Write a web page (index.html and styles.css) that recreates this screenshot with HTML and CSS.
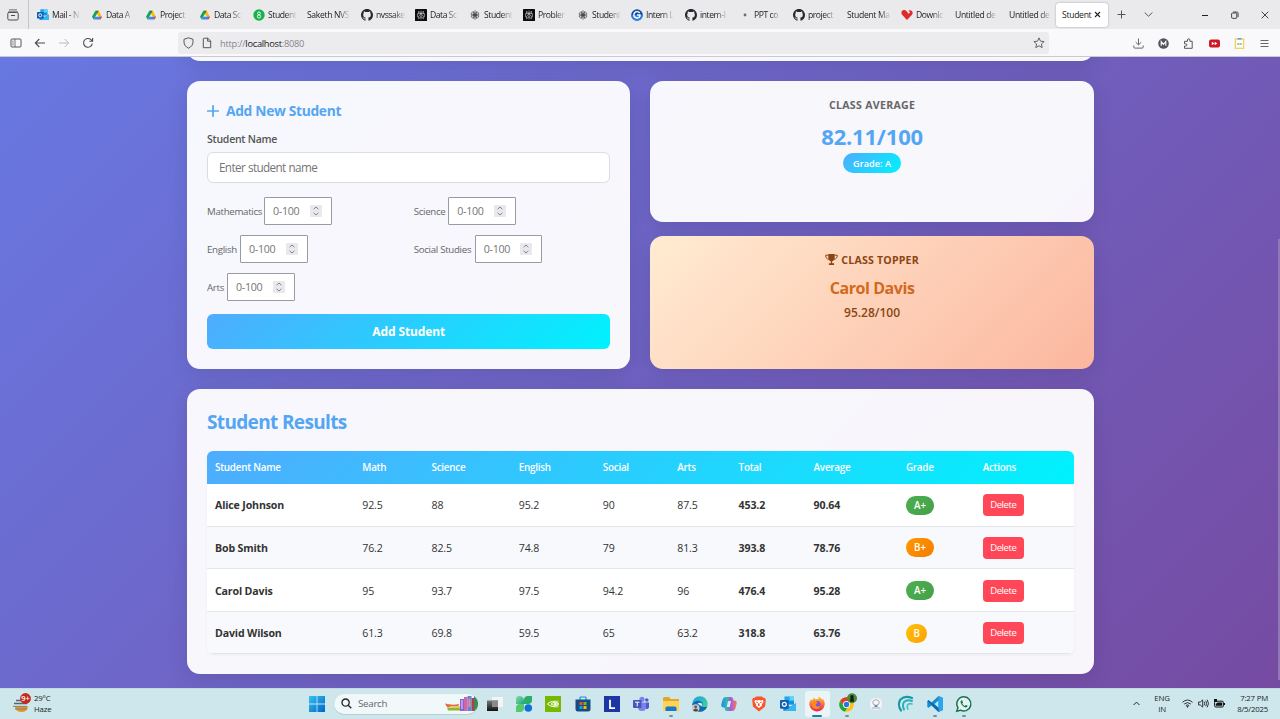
FILE: index.html
```html
<!DOCTYPE html>
<html lang="en">
<head>
<meta charset="utf-8">
<title>Student Management</title>
<link rel="stylesheet" href="styles.css">
</head>
<body>
<svg class="sprite" aria-hidden="true">
  <defs>
    <linearGradient id="g-win" x1="0" y1="0" x2="1" y2="1"><stop offset="0" stop-color="#35c1f1"/><stop offset="1" stop-color="#0067c8"/></linearGradient>
    <linearGradient id="g-fox" x1="0" y1="0" x2="0" y2="1"><stop offset="0" stop-color="#ffce35"/><stop offset=".5" stop-color="#ff7139"/><stop offset="1" stop-color="#e8214f"/></linearGradient>
    <linearGradient id="g-edge" x1="0" y1="0" x2="1" y2="1"><stop offset="0" stop-color="#1b9de2"/><stop offset=".6" stop-color="#35c6b0"/><stop offset="1" stop-color="#69d860"/></linearGradient>
    <linearGradient id="g-cop" x1="0" y1="0" x2="1" y2="0"><stop offset="0" stop-color="#1c8be8"/><stop offset=".35" stop-color="#36b8a8"/><stop offset=".6" stop-color="#a05be8"/><stop offset="1" stop-color="#fb7b4a"/></linearGradient>
    <linearGradient id="g-petal" x1="0" y1="0" x2="1" y2="1"><stop offset="0" stop-color="#8fdc9b"/><stop offset="1" stop-color="#17a589"/></linearGradient>
    <linearGradient id="g-task" x1="0" y1="0" x2="0" y2="1"><stop offset="0" stop-color="#777"/><stop offset="1" stop-color="#111"/></linearGradient>
  </defs>
  <symbol id="drive" viewBox="0 0 24 24"><path d="M8 2h8l8 14h-8z" fill="#fbbc04"/><path d="M8 2l4 7-8 14-4-7z" fill="#18a05a"/><path d="M8 16h16l-4 7H4z" fill="#4285f4"/><path d="M18 16h6l-4 7z" fill="#ea4335"/><path d="M8 2h8l-4 7z" fill="#188038"/></symbol>
  <symbol id="github" viewBox="0 0 16 16"><path fill="#24292f" d="M8 0C3.58 0 0 3.58 0 8c0 3.54 2.29 6.53 5.47 7.59.4.07.55-.17.55-.38 0-.19-.01-.82-.01-1.49-2.01.37-2.53-.49-2.69-.94-.09-.23-.48-.94-.82-1.13-.28-.15-.68-.52-.01-.53.63-.01 1.08.58 1.23.82.72 1.21 1.87.87 2.33.66.07-.52.28-.87.51-1.07-1.78-.2-3.64-.89-3.64-3.95 0-.87.31-1.59.82-2.15-.08-.2-.36-1.02.08-2.12 0 0 .67-.21 2.2.82A7.6 7.6 0 0 1 8 3.87c.68 0 1.36.09 2 .27 1.53-1.04 2.2-.82 2.2-.82.44 1.1.16 1.92.08 2.12.51.56.82 1.27.82 2.15 0 3.07-1.87 3.75-3.65 3.95.29.25.54.73.54 1.48 0 1.07-.01 1.93-.01 2.2 0 .21.15.46.55.38A8.01 8.01 0 0 0 16 8c0-4.42-3.58-8-8-8z"/></symbol>
  <symbol id="knot" viewBox="0 0 24 24"><g fill="none" stroke="#3a3a3e" stroke-width="1.400"><ellipse cx="12" cy="8" rx="4.2" ry="6"/><ellipse cx="12" cy="8" rx="4.2" ry="6" transform="rotate(60 12 12)"/><ellipse cx="12" cy="8" rx="4.2" ry="6" transform="rotate(120 12 12)"/><ellipse cx="12" cy="8" rx="4.2" ry="6" transform="rotate(180 12 12)"/><ellipse cx="12" cy="8" rx="4.2" ry="6" transform="rotate(240 12 12)"/><ellipse cx="12" cy="8" rx="4.2" ry="6" transform="rotate(300 12 12)"/></g></symbol>
  <symbol id="mesh" viewBox="0 0 12 12"><rect width="12" height="12" rx=".6" fill="#0c0c0c"/><path d="M6 1.6v8.800M2.600 4.600h6.800v3.600M2.600 4.600v3.600M3.600 2.200L6 4.600l2.400-2.400v2.400M3.600 2.200v2.400M6 4.800L3.600 7.200v2.600L6 7.600l2.400 2.200V7.200z" fill="none" stroke="#ddd" stroke-width=".6"/></symbol>
  <symbol id="outlook" viewBox="0 0 24 24"><path d="M7 1h14v12H7z" fill="#1490df"/><path d="M14 1h7v6h-7z" fill="#50d9ff"/><path d="M7 1h7v6H7z" fill="#28a8ea"/><path d="M5 11l10 5 9-5v11H5z" fill="#1a86d8"/><path d="M24 11v11H7z" fill="#35b8f1"/><rect y="6" width="13" height="13" rx="1.2" fill="#0f5fb5"/><circle cx="6.500" cy="12.500" r="3" fill="none" stroke="#fff" stroke-width="1.800"/></symbol>
  <symbol id="spin" viewBox="0 0 12 12"><rect width="12" height="12" rx="1" fill="#e9e9ed"/><path d="M3.600 4.200L6 2l2.400 2.200M3.600 7.800L6 10l2.400-2.200" fill="none" stroke="#77777e" stroke-width=".9"/></symbol>
</svg>

<header class="browser">
  <div class="tabs">
    <div class="tabs-lead"><svg width="12" height="12" viewBox="0 0 12 12" fill="none" stroke="#4a4a50"><path d="M2 .9h8M1.200 2.900h9.600" stroke-width=".8"/><rect x=".8" y="3.400" width="10.400" height="7.600" rx="1.300"/><path d="M4 6.500h4"/></svg></div>
    <div class="tab"><svg class="fav"><use href="#outlook"/></svg><span>Mail - N</span></div>
    <div class="tab"><svg class="fav small"><use href="#drive"/></svg><span>Data A</span></div>
    <div class="tab"><svg class="fav small"><use href="#drive"/></svg><span>Project</span></div>
    <div class="tab"><svg class="fav small"><use href="#drive"/></svg><span>Data Sc</span></div>
    <div class="tab"><svg class="fav" viewBox="0 0 12 12"><circle cx="6" cy="6" r="5.700" fill="#16b14b"/><circle cx="6" cy="4.400" r="1.400" fill="none" stroke="#fff" stroke-width=".9"/><circle cx="6" cy="7.500" r="1.600" fill="none" stroke="#fff" stroke-width=".9"/></svg><span>Student</span></div>
    <div class="tab wide"><span>Saketh NVS</span></div>
    <div class="tab"><svg class="fav"><use href="#github"/></svg><span>nvssake</span></div>
    <div class="tab"><svg class="fav"><use href="#mesh"/></svg><span>Data Sc</span></div>
    <div class="tab"><svg class="fav small"><use href="#knot"/></svg><span>Student</span></div>
    <div class="tab"><svg class="fav"><use href="#mesh"/></svg><span>Probler</span></div>
    <div class="tab"><svg class="fav small"><use href="#knot"/></svg><span>Student</span></div>
    <div class="tab"><svg class="fav" viewBox="0 0 12 12"><circle cx="6" cy="6" r="5.800" fill="#164fa0"/><path d="M.2 6a5.800 5.800 0 0 0 11.600 0z" fill="#2f83df"/><path d="M8.700 4A3.200 3.200 0 1 0 9 7V6H6.200" fill="none" stroke="#fff" stroke-width="1.400"/></svg><span>Intern L</span></div>
    <div class="tab"><svg class="fav"><use href="#github"/></svg><span>intern-l</span></div>
    <div class="tab"><svg class="fav" viewBox="0 0 12 12"><circle cx="6" cy="6" r="1.400" fill="#6a6a70"/></svg><span>PPT co</span></div>
    <div class="tab"><svg class="fav"><use href="#github"/></svg><span>project</span></div>
    <div class="tab wide"><span>Student Ma</span></div>
    <div class="tab"><svg class="fav" viewBox="0 0 12 12"><path d="M6 11L1.300 6C-.5 3.800.6 1.200 2.800 1c1.500 0 2.400.7 3.200 1.700l1.600 2 1.500-1.200L7.500 1.800Q8.300 1 9.500 1.300c2 .7 3 2.700 1.300 4.600z" fill="#df2b2b"/></svg><span>Downlc</span></div>
    <div class="tab wide"><span>Untitled de</span></div>
    <div class="tab wide"><span>Untitled de</span></div>
    <div class="tab active"><span>Student</span><svg width="7" height="7" viewBox="0 0 7 7"><path d="M1 1l5 5M6 1L1 6" stroke="#222" stroke-width="1.100"/></svg></div>
    <div class="window-tools">
      <svg width="9" height="9" viewBox="0 0 9 9" stroke="#55555c"><path d="M4.500 .5v8M.5 4.500h8"/></svg>
      <svg width="9" height="9" viewBox="0 0 9 9" fill="none" stroke="#55555c"><path d="M.7 2.500L4.500 6.300 8.300 2.500"/></svg>
    </div>
    <div class="window-buttons">
      <svg width="8" height="8" viewBox="0 0 8 8" stroke="#222"><path d="M1 4.500h6"/></svg>
      <svg width="8" height="8" viewBox="0 0 8 8" fill="none" stroke="#333" stroke-width=".9"><rect x=".6" y="2" width="5.200" height="5.300" rx=".8"/><path d="M2.200 1h3.600q1.300 0 1.300 1.300V6"/></svg>
      <svg width="8" height="8" viewBox="0 0 8 8" stroke="#333" stroke-width=".9"><path d="M.7 .7l6.600 6.600M7.300 .7L.7 7.300"/></svg>
    </div>
  </div>
  <div class="toolbar">
    <div class="nav">
      <svg width="12" height="12" viewBox="0 0 12 12" fill="none" stroke="#55555c"><rect x="1" y="2" width="10" height="8" rx="1"/><path d="M5 2v8M2.300 4.200h1.400M2.300 6h1.400M2.300 7.800h1.400" stroke-width=".8"/></svg>
      <svg width="12" height="12" viewBox="0 0 12 12" fill="none" stroke="#4a4a50" stroke-width="1.100"><path d="M11 6H1.500M5.300 2L1.300 6l4 4"/></svg>
      <svg width="12" height="12" viewBox="0 0 12 12" fill="none" stroke="#b9b9be" stroke-width="1"><path d="M1 6h9.500M6.700 2l4 4-4 4"/></svg>
      <svg width="12" height="12" viewBox="0 0 12 12" fill="none" stroke="#4a4a50" stroke-width="1.100"><path d="M10.300 6.500A4.400 4.400 0 1 1 9 2.700L10.500 4M10.600 1v3.300H7.400"/></svg>
    </div>
    <div class="urlbar">
      <svg width="11" height="12" viewBox="0 0 11 12" fill="none" stroke="#55555c"><path d="M5.500 .8L10 2.300v2.500c0 3-1.600 5-4.500 6.400C2.600 9.800 1 7.800 1 4.800V2.300z"/></svg>
      <svg width="10" height="12" viewBox="0 0 10 12" fill="none" stroke="#55555c"><path d="M2.200 1.200h3.600L8.700 4v6.700H1.300V2q0-.8.9-.8zM5.600 1.200v3h3"/></svg>
      <span class="url">http://<b>localhost</b>:8080</span>
      <svg class="star" width="12" height="12" viewBox="0 0 12 12" fill="none" stroke="#55555c" stroke-width=".9"><path d="M6 .9l1.500 3.300 3.600.4-2.700 2.400.8 3.600L6 8.800l-3.200 1.800.8-3.600L.9 4.600l3.600-.4z"/></svg>
    </div>
    <div class="extensions">
      <svg width="11" height="11" viewBox="0 0 11 11" fill="none" stroke="#66666c"><path d="M5.500 .5v6.300M2.700 4.200l2.800 2.700 2.800-2.700M.8 7.500V9q0 1.100 1 1.100h7.400q1 0 1-1.100V7.500"/></svg>
      <svg width="11" height="11" viewBox="0 0 11 11"><circle cx="5.500" cy="5.500" r="5.300" fill="#54545c"/><path d="M3.200 7.800V3.500l2.300 2.800 2.300-2.800v4.300" fill="none" stroke="#fff" stroke-width="1.100"/></svg>
      <svg width="11" height="11" viewBox="0 0 11 11" fill="none" stroke="#55555c"><path d="M1.500 3.300h3V2q0-1.200 1.200-1.200T6.900 2v1.300h2.300v7H1.500V8h1.200q1.200 0 1.200-1.100T2.700 5.800H1.500z"/></svg>
      <svg width="11" height="11" viewBox="0 0 11 11"><rect y="1.500" width="11" height="8" rx="2" fill="#cf1922"/><path d="M2.800 3.800l2.700 1.700-2.700 1.700zM5.700 3.800l2.700 1.700-2.700 1.700z" fill="#fff"/></svg>
      <svg width="11" height="11" viewBox="0 0 11 11" fill="none"><rect x="1.300" y="1" width="8.400" height="9.300" fill="#fffdf0" stroke="#ecd254" stroke-width="1.200"/><path d="M3.500 .8h4" stroke="#5ba6dc" stroke-width="1.600"/><path d="M3 6h5M4.200 5v2M6.800 5v2" stroke="#78a8b8" stroke-width=".8"/></svg>
      <svg width="11" height="11" viewBox="0 0 11 11" stroke="#55555c" stroke-width=".9"><path d="M1.500 2.500h8M1.500 5.500h8M1.500 8.500h8"/></svg>
    </div>
  </div>
</header>

<main class="page">
  <div class="container">
    <div class="card card-tail"></div>
    <div class="top-grid">
      <section class="card form-card">
        <h3 class="form-title"><svg width="12" height="12" viewBox="0 0 12 12"><path d="M6 .7v10.600M.7 6h10.600" stroke="#54a6f3" stroke-width="1.700" stroke-linecap="round"/></svg><span>Add New Student</span></h3>
        <label class="name-label">Student Name</label>
        <div class="name-input">Enter student name</div>
        <div class="marks">
          <div class="mark"><label class="l-math">Mathematics</label><div class="num"><span>0-100</span><svg width="12" height="12"><use href="#spin"/></svg></div></div>
          <div class="mark"><label class="l-sci">Science</label><div class="num"><span>0-100</span><svg width="12" height="12"><use href="#spin"/></svg></div></div>
          <div class="mark"><label class="l-eng">English</label><div class="num"><span>0-100</span><svg width="12" height="12"><use href="#spin"/></svg></div></div>
          <div class="mark"><label class="l-soc">Social Studies</label><div class="num"><span>0-100</span><svg width="12" height="12"><use href="#spin"/></svg></div></div>
          <div class="mark"><label class="l-arts">Arts</label><div class="num"><span>0-100</span><svg width="12" height="12"><use href="#spin"/></svg></div></div>
        </div>
        <div class="submit"><span>Add Student</span></div>
      </section>
      <div class="stats">
        <section class="card stat">
          <h4 class="stat-title">CLASS AVERAGE</h4>
          <div class="avg">82.11/100</div>
          <div class="avg-grade">Grade: A</div>
        </section>
        <section class="card stat topper">
          <h4 class="stat-title"><svg width="13" height="11" viewBox="0 0 13 11"><path d="M3.300 0h6.400v3.500c0 2-1 3.400-2.500 3.800v1.900h1.900V11H3.900V9.200h1.900V7.300C4.300 6.900 3.300 5.500 3.300 3.500z" fill="#8b4513"/><path d="M3.500 1.200H.7c0 2.300.9 3.900 3.500 4.200M9.500 1.200h2.800c0 2.300-.9 3.900-3.500 4.200" fill="none" stroke="#8b4513"/></svg><span>CLASS TOPPER</span></h4>
          <div class="topper-name">Carol Davis</div>
          <div class="topper-score">95.28/100</div>
        </section>
      </div>
    </div>
    <section class="card results">
      <h2 class="results-title">Student Results</h2>
      <div class="table">
        <div class="row head"><span>Student Name</span><span>Math</span><span>Science</span><span>English</span><span>Social</span><span>Arts</span><span>Total</span><span>Average</span><span>Grade</span><span>Actions</span></div>
        <div class="row"><b>Alice Johnson</b><span>92.5</span><span>88</span><span>95.2</span><span>90</span><span>87.5</span><b>453.2</b><b>90.64</b><span><i class="grade green">A+</i></span><span><i class="delete">Delete</i></span></div>
        <div class="row"><b>Bob Smith</b><span>76.2</span><span>82.5</span><span>74.8</span><span>79</span><span>81.3</span><b>393.8</b><b>78.76</b><span><i class="grade orange">B+</i></span><span><i class="delete">Delete</i></span></div>
        <div class="row"><b>Carol Davis</b><span>95</span><span>93.7</span><span>97.5</span><span>94.2</span><span>96</span><b>476.4</b><b>95.28</b><span><i class="grade green">A+</i></span><span><i class="delete">Delete</i></span></div>
        <div class="row"><b>David Wilson</b><span>61.3</span><span>69.8</span><span>59.5</span><span>65</span><span>63.2</span><b>318.8</b><b>63.76</b><span><i class="grade amber">B</i></span><span><i class="delete">Delete</i></span></div>
      </div>
    </section>
  </div>
  <div class="scrollbar"></div>
</main>

<footer class="taskbar">
  <div class="weather">
    <svg width="19" height="20" viewBox="0 0 19 20"><path d="M2 13.500h13a6.500 5.500 0 0 1-13 0z" fill="#ef9220"/><path d="M3 7.500h6M1 10.500h13" stroke="#57656c" stroke-width="1.300"/><path d="M0 13.400h14M2 16h12" stroke="#79857f" stroke-width="1"/><circle cx="12.500" cy="5.500" r="5.400" fill="#c42b1c"/><text x="12.500" y="8.300" text-anchor="middle" class="badge">9+</text></svg>
    <div class="two-line left"><span>29°C</span><span>Haze</span></div>
  </div>
  <div class="apps">
    <svg class="app start" viewBox="0 0 16 16"><path d="M0 0h7.600v7.600H0zM8.400 0H16v7.600H8.400zM0 8.400h7.600V16H0zM8.400 8.400H16V16H8.400z" fill="url(#g-win)"/></svg>
    <div class="search">
      <svg width="11" height="11" viewBox="0 0 11 11" fill="none" stroke="#222" stroke-width="1.300"><circle cx="4.600" cy="4.600" r="3.600"/><path d="M7.300 7.300l3 3"/></svg>
      <span>Search</span>
      <svg class="books" width="33" height="17" viewBox="0 0 33 17"><path d="M0 8.500q7 2 14 .5l-1 3H2z" fill="#e86a3c"/><path d="M2 12.500h14v3H3z" fill="#8fb53b"/><path d="M5 11h10v1.600H5z" fill="#e8c766"/><rect x="15" y="4" width="4" height="12" fill="#8a63d2"/><rect x="16.200" y="5" width="1.500" height="9" fill="#d0a7ef"/><rect x="19" y="2" width="3.500" height="14" fill="#d862a8"/><rect x="22.500" y="1" width="4" height="15" fill="#5a87de"/><rect x="23.500" y="4" width="2" height="8" fill="#ea8d7c"/><rect x="26.500" y="3" width="3" height="13" fill="#a7405c"/><path d="M29 1q4 3 4 8t-4 7z" fill="#3c8b4a"/></svg>
    </div>
    <div class="app"><svg viewBox="0 0 16 16"><path d="M5 1h11v10H5z" fill="#f4f4f4"/><path d="M0 4.500h11V15H0z" fill="url(#g-task)"/><path d="M5 4.500h6V11H5z" fill="#8b8b8b"/></svg></div>
    <div class="app"><svg viewBox="0 0 16 16"><path d="M0 8V3q0-3 3-3 5 0 5 5v3z" fill="url(#g-petal)"/><path d="M16 0v4q0 4-4 4H8V4q0-4 4-4z" fill="#2bae68"/><path d="M0 16v-4q0-4 4-4h4v4q0 4-4 4z" fill="#56c76d"/><circle cx="12.300" cy="12" r="3.800" fill="#0d72d8"/></svg></div>
    <div class="app"><svg viewBox="0 0 16 16"><rect width="16" height="16" fill="#76b900"/><path d="M2.500 8q4.500-5 11 0-5.500 5-11 0zM6 8q2.500-3 5 0Q8.500 10.500 6 8z" fill="none" stroke="#fff"/><path d="M8.500 4.500h5v7h-5z" fill="#fff" fill-opacity=".5"/></svg></div>
    <div class="app"><svg viewBox="0 0 16 16"><path d="M5 4V1.800Q5 1 6 1h4q1 0 1 .8V4" fill="none" stroke="#228be0" stroke-width="1.200"/><path d="M.5 3.500h15V13q0 2.500-2.500 2.500H3Q.5 15.500.5 13z" fill="#164c86"/><path d="M4.500 6h3v3h-3z" fill="#f25022"/><path d="M8.500 6h3v3h-3z" fill="#7fba00"/><path d="M4.500 10h3v3h-3z" fill="#00a4ef"/><path d="M8.500 10h3v3h-3z" fill="#ffb900"/></svg></div>
    <div class="app"><svg viewBox="0 0 16 16"><rect width="16" height="16" fill="#1c37a4"/><path d="M6 3.800v8.400h5" fill="none" stroke="#fff" stroke-width="1.800"/></svg></div>
    <div class="app"><svg viewBox="0 0 16 16"><circle cx="9" cy="3.300" r="2.600" fill="#7b83eb"/><circle cx="13.800" cy="4" r="1.800" fill="#5059c9"/><path d="M5 6.500h8v5q0 3.500-4 3.500t-4-3.500z" fill="#7b83eb"/><path d="M13 6.500h3V11q0 2-3 2z" fill="#5059c9"/><rect y="4" width="8.500" height="8" rx=".8" fill="#4b53bc"/><path d="M2 6.200h4.500M4.250 6.200V10.300" stroke="#fff"/></svg></div>
    <div class="app open"><svg viewBox="0 0 16 16"><path d="M0 2.500q0-1.500 1.500-1.500H6l1.500 2H16v6H0z" fill="#e5a624"/><path d="M0 5h16v10H0z" fill="#ffd355"/><path d="M2.500 15v-3q0-1.500 1.500-1.500h8q1.500 0 1.500 1.500v3z" fill="#1979c9"/></svg></div>
    <div class="app"><svg viewBox="0 0 16 16"><circle cx="8" cy="8" r="7.700" fill="url(#g-edge)"/><path d="M.3 8.500C1 5 8 3 10.500 7c.8 2-1 2.500-.5 3.300 1 1.300 4 .9 5.200-.1-1.500 5-6.700 6.600-10.700 4.700z" fill="#1168b5"/><path d="M5.500 7.500c2-1.600 5-.8 4.700 1.500-.6.800-.8 1-.2 1.700" fill="#d7eef4"/><circle cx="3.700" cy="12" r="3.800" fill="#c8c8c8"/><circle cx="3.700" cy="10.800" r="1.400" fill="#5a5653"/><path d="M1 14.500q2.700-3.800 5.400 0-2.700 2.200-5.400 0z" fill="#54483f"/></svg></div>
    <div class="app"><svg viewBox="0 0 16 16"><path d="M5 1h5q1.500 0 2 1.500l.5 2h1q2.500 0 2.200 3L14.500 12q-.8 3-3.500 3H6q-1.500 0-2-1.500l-.5-2h-1q-2.500 0-2.200-3L1.500 4Q2.300 1 5 1z" fill="url(#g-cop)"/><path d="M7 5h3L8.800 11H5.700z" fill="#d4ecf1"/></svg></div>
    <div class="app"><svg viewBox="0 0 16 16"><path d="M5 .5h6l1.500 1.500 1.500-.2.800 2.200-.7 6.500L8 15.500 1.900 10.500 1.200 4 2 1.800l1.500.2z" fill="#fb542b"/><path d="M4 4l2.300.5L8 4l1.700.5L12 4l.5 2-1.800 2.400.3 1.300L8 11.900 5 9.700l.3-1.300L3.500 6z" fill="#fff"/><path d="M5 6l2 .7M11 6l-2 .7M8 7v2l-1.200.7M8 9l1.200.7" stroke="#fb542b" stroke-width=".8"/></svg></div>
    <div class="app"><svg viewBox="0 0 24 24"><use href="#outlook"/></svg></div>
    <div class="app current"><svg viewBox="0 0 16 16"><path d="M1.800 3.500L3 4.200Q4 2 6 1.500q-.5 1 .3 1.800L9.500 3Q9 1.500 10 .3c.5 1.300 2.300 1.700 3.300 3.200l.8-.5c1.300 1.800 1.900 4 1.500 6A7.700 7.700 0 0 1 .3 8.300Q.3 5.500 1.800 3.500z" fill="url(#g-fox)"/><circle cx="8" cy="8.700" r="3.700" fill="#8055d8"/><path d="M3 5q3-1 5.800 1.500L7 8q-1 1.500.8 2.500 2 .5 3.400-1-.7 4-4.200 3.500Q2 12 3 5z" fill="#ff8b25"/></svg></div>
    <div class="app open"><svg viewBox="0 0 16 16"><circle cx="7.500" cy="8.500" r="7.300" fill="#fbc116"/><path d="M1.200 4.900A7.300 7.300 0 0 1 14 5H7.500L5 10z" fill="#e33b2e"/><path d="M1.200 4.900L5 11l3 1-2 3.600A7.300 7.300 0 0 1 1.200 4.900z" fill="#1ea446"/><circle cx="7.500" cy="8.500" r="3.500" fill="#fff"/><circle cx="7.500" cy="8.500" r="2.700" fill="#2476e4"/><circle cx="13" cy="2.200" r="5" fill="#52863b"/><circle cx="13" cy=".7" r="1.700" fill="#14200f"/><path d="M11.500 1.700h3l.5 4h-4z" fill="#14200f"/></svg></div>
    <div class="app"><svg viewBox="0 0 16 16"><circle cx="8" cy="8" r="7" fill="#f4f7fa"/><circle cx="8" cy="8" r="6.500" fill="none" stroke="#c7cdd3" stroke-width=".6"/><path d="M5 5q3-3 6 0v3q-3 3-6 0zM4 12h8" fill="none" stroke="#a5acb8"/><path d="M6.500 9h3v2h-3z" fill="#6989b5"/></svg></div>
    <div class="app"><svg viewBox="0 0 16 16" fill="none" stroke-linecap="round"><path d="M15 2Q8-1 3.500 3.500 0 8 4 14.500" stroke="#1798a7" stroke-width="2.200"/><path d="M15 5Q10 3 7 6q-2 3 0 7.500" stroke="#29afb5" stroke-width="2"/><path d="M15 8q-3-1-4.500 1-.8 2 .3 4" stroke="#3cc4c4" stroke-width="1.700"/></svg></div>
    <div class="app open"><svg viewBox="0 0 16 16"><path d="M11.500 0L16 2v12l-4.500 2L4.500 9.500 1.700 11.800.3 11V5l1.400-.8 2.800 2.300zM11.500 4.500L7.500 8l4 3.500z" fill="#168bd2" fill-rule="evenodd"/><path d="M11.500 0L16 2v12l-4.500 2z" fill="#2ba5ed"/><path d="M.5 5l1.200-.8 9.800 8V16z" fill="#0869ad"/></svg></div>
    <div class="app open"><svg viewBox="0 0 16 16"><path d="M8 .8A7.100 7.100 0 0 0 1.900 11.600L.8 15.200l3.700-1A7.100 7.100 0 1 0 8 .8z" fill="#e4f3ef" stroke="#17734f" stroke-width="1.500"/><path d="M5.300 4.200q-1 1-.7 2.300 1.200 3.700 5 5 1.800 0 2.100-1.700L9.800 8.900l-1 1Q7 9.200 6.200 7.400L7 6.500l-.8-2z" fill="#17734f"/></svg></div>
  </div>
  <div class="tray">
    <svg width="7" height="5" viewBox="0 0 7 5" fill="none" stroke="#222"><path d="M.6 4l2.900-2.900L6.400 4"/></svg>
    <div class="two-line lang"><span>ENG</span><span>IN</span></div>
    <div class="status">
      <svg width="11" height="9" viewBox="0 0 11 9" fill="none" stroke="#222" stroke-width=".9"><path d="M.5 3.300q5-4.600 10 0M2.200 5q3.300-2.800 6.600 0M3.800 6.600q1.700-1.400 3.400 0"/><circle cx="5.500" cy="7.700" r=".5" fill="#222"/></svg>
      <svg width="11" height="9" viewBox="0 0 11 9" fill="none" stroke="#222" stroke-width=".9"><path d="M.6 3h1.700L4.700 .9v7.200L2.300 6H.6zM6.200 2.800q1 1.700 0 3.400M7.700 1.700q2 2.800 0 5.600M9.200 .7q2.600 3.800 0 7.600"/></svg>
      <svg width="11" height="9" viewBox="0 0 11 9"><rect x=".6" y="2.200" width="8.800" height="5.800" rx="1.200" fill="none" stroke="#111"/><path d="M3.500 3.500h4.700v3.300H1.800V5zM9.800 4h1.200v2H9.800zM0 0h3v3H0z" fill="#111"/></svg>
    </div>
    <div class="two-line right"><span>7:27 PM</span><span>8/5/2025</span></div>
  </div>
</footer>
</body>
</html>
```

FILE: styles.css
```css
* { box-sizing: border-box; }
body {
  margin: 0;
  width: 1280px;
  height: 719px;
  overflow: hidden;
  display: flex;
  flex-direction: column;
  font-family: "Open Sans", "Noto Sans", sans-serif;
  color: #333;
}
svg { display: block; flex: none; }
.sprite { position: absolute; width: 0; height: 0; }
h2, h3, h4 { margin: 0; }
i { font-style: normal; }

/* Browser chrome */
.browser { height: 57px; flex: none; background: #f9f9fb; border-bottom: 1px solid #c9c9d2; }
.tabs { height: 29px; display: flex; align-items: center; background: #eaeaed; font-size: 8.600px; color: #222; }
.tabs-lead { width: 29px; height: 29px; padding: 9px 0 0 7px; border-right: 1px solid #c4c4c9; }
.tab { width: 54px; flex: none; height: 24px; padding: 0 4px 0 8px; display: flex; align-items: center; gap: 3px; }
.tab span { flex: 1; white-space: nowrap; letter-spacing: -.45px; mask-image: linear-gradient(90deg, #000 60%, rgba(0,0,0,.1)); }
.tab.wide { padding-right: 6px; }
.tab.wide span { letter-spacing: -.35px; mask-image: linear-gradient(90deg, #000 75%, rgba(0,0,0,.1)); }
.fav { width: 12px; height: 12px; }
.fav.small { width: 10px; height: 10px; margin: 0 1px; }
.tab.active { width: 52px; margin-left: 1px; padding: 0 7px 0 6px; background: #fff; border-radius: 3px; box-shadow: 0 0 2px rgba(0,0,0,.35); }
.tab.active span { mask-image: none; letter-spacing: -.3px; }
.window-tools { display: flex; gap: 18px; margin-left: 9px; }
.window-buttons { display: flex; gap: 22px; margin-left: auto; margin-right: 11px; }
.toolbar { height: 28px; display: flex; align-items: center; }
.nav { display: flex; gap: 12px; width: 178px; padding-left: 10px; }
.urlbar { width: 871px; height: 22px; display: flex; align-items: center; gap: 8px; padding: 0 4px 0 5px; background: #ececef; border-radius: 3px; }
.url { font-size: 9.300px; color: #85858b; letter-spacing: -.28px; }
.url b { font-weight: 400; color: #17171b; }
.star { margin-left: auto; }
.extensions { flex: 1; display: flex; justify-content: space-between; padding: 0 10px 0 84px; }

/* Page */
.page {
  height: 631px;
  flex: none;
  position: relative;
  overflow: hidden;
  background: linear-gradient(135deg, #667eea 0%, #764ba2 100%) bottom / 1280px 880px no-repeat;
}
.container { width: 906.800px; margin: 0 auto 0 187px; }
.card { background: rgba(255,255,255,.95); border-radius: 13px; box-shadow: 0 5px 21px rgba(0,0,0,.1); }
.card-tail { height: 40px; margin-top: -35.600px; }
.top-grid { display: grid; grid-template-columns: 1fr 1fr; gap: 20px; margin-top: 20px; height: 287.500px; }
.form-card { padding: 20px; }
.form-title { display: flex; align-items: center; gap: 7px; height: 19px; font-size: 13.800px; font-weight: 700; color: #54a6f3; letter-spacing: -.32px; }
.name-label { display: block; margin-top: 12px; height: 14px; line-height: 14px; font-size: 10.500px; font-weight: 600; color: #555; letter-spacing: -.25px; }
.name-input { height: 31px; margin-top: 6px; padding: 0 11px; border: 1px solid #dcdce3; border-radius: 6px; background: #fff; font-size: 11.700px; line-height: 29px; color: #757575; letter-spacing: -.62px; word-spacing: .5px; }
.marks { display: grid; grid-template-columns: 1fr 1fr; grid-auto-rows: 28px; gap: 10px; margin-top: 13.600px; }
.mark { display: flex; align-items: center; gap: 3px; }
.mark label { font-size: 9.700px; color: #666; letter-spacing: -.3px; white-space: nowrap; }
.l-math { width: 54px; }
.l-sci { width: 31.500px; }
.l-eng { width: 30px; }
.l-soc { width: 58px; }
.l-arts { width: 17px; }
.num { width: 67.500px; height: 28px; display: flex; align-items: center; justify-content: space-between; padding: 0 9px 0 8px; border: 1px solid #9a9aa2; border-radius: 1px; background: #fff; font-size: 10.700px; color: #757575; letter-spacing: -.3px; }
.submit { height: 35px; margin-top: 13px; display: flex; align-items: center; justify-content: center; border-radius: 6px; background: linear-gradient(135deg, #4facfe, #00f2fe); color: #fff; font: 700 12px "Noto Sans", sans-serif; letter-spacing: -.1px; }
.stats { display: grid; grid-template-rows: 141px 133px; gap: 13.500px; }
.stat { display: flex; flex-direction: column; align-items: center; padding-top: 17px; }
.stat-title { display: flex; align-items: center; gap: 3px; height: 14px; font-size: 10.600px; font-weight: 700; color: #666; letter-spacing: .3px; }
.avg { margin-top: 9px; height: 31px; line-height: 31px; font-size: 22px; font-weight: 700; color: #54a6f3; letter-spacing: -.2px; }
.avg-grade { width: 58px; height: 20px; margin-top: 1px; border-radius: 10px; background: linear-gradient(135deg, #4facfe, #00f2fe); color: #fff; font-size: 9.200px; font-weight: 600; line-height: 21px; text-align: center; }
.topper { background: linear-gradient(135deg, #ffecd2, #fcb69f); }
.topper .stat-title { color: #8b4513; letter-spacing: .2px; }
.topper-name { margin-top: 10px; height: 22px; line-height: 22px; font-size: 16px; font-weight: 700; color: #d2691e; letter-spacing: -.42px; }
.topper-score { margin-top: 6px; height: 16px; line-height: 16px; font-size: 12px; font-weight: 600; color: #8b4513; letter-spacing: 0; }

.results { margin-top: 20px; height: 285.500px; padding: 20px; }
.results-title { height: 27px; line-height: 26px; font-size: 19px; font-weight: 700; color: #54a6f3; letter-spacing: -.65px; }
.table { margin-top: 15px; border-radius: 6px; overflow: hidden; box-shadow: 0 1px 3px rgba(0,0,0,.05); }
.row { display: grid; grid-template-columns: 147.300px 69.200px 87.300px 84px 74.500px 61.300px 75px 92.300px 76.800px 99px; align-items: center; height: 42.650px; padding-left: 8px; background: #fff; border-bottom: 1px solid #e4e6ea; font-size: 10.600px; letter-spacing: -.15px; }
.row:nth-child(odd) { background: #f8f9fc; }
.row > b, .row:not(.head) > span { padding-top: 1px; }
.row.head { height: 33px; border: 0; background: linear-gradient(135deg, #4facfe, #00f2fe); color: #fff; font-size: 9.900px; font-weight: 600; letter-spacing: -.25px; }
.row b { font-weight: 700; }
.grade { display: inline-block; height: 19px; line-height: 20px; padding: 0 8px; border-radius: 10px; color: #fff; font-size: 9.800px; font-weight: 600; letter-spacing: .15px; vertical-align: middle; }
.green { background: linear-gradient(135deg, #4caf50, #45a049); }
.orange { background: linear-gradient(135deg, #ff9800, #f57c00); }
.amber { background: linear-gradient(135deg, #ffc107, #ffa000); padding: 0 7.500px; }
.delete { display: inline-block; width: 41.300px; height: 22px; line-height: 22px; text-align: center; border-radius: 4px; background: #ff4757; color: #fff; font-size: 9.500px; letter-spacing: -.4px; vertical-align: middle; }
.scrollbar { position: absolute; right: 0; top: 182px; width: 2px; height: 441px; background: #9078b8; }

/* Taskbar */
.taskbar { height: 31px; flex: none; display: grid; grid-template-columns: 304px 676px 1fr; align-items: center; background: #cde7ed; border-top: 1px solid #c3d9e6; padding-bottom: 1px; }
.weather { display: flex; gap: 2px; padding-left: 13px; }
.badge { font: 600 7.500px "Open Sans", sans-serif; fill: #fff; }
.two-line { display: flex; flex-direction: column; font-size: 7.800px; line-height: 10.700px; color: #222; letter-spacing: -.2px; }
.two-line.lang { align-items: center; }
.two-line.right { align-items: flex-end; }
.apps { display: flex; align-items: center; height: 29px; }
.app { width: 29.350px; height: 26px; flex: none; display: flex; align-items: center; justify-content: center; position: relative; }
.app svg { width: 16px; height: 16px; overflow: visible; }
.app.start { width: 16px; height: 16px; margin: 0 9px 0 5px; }
.search { width: 144px; height: 20px; margin-right: 2px; display: flex; align-items: center; gap: 6px; padding: 0 0 0 7px; background: #f1f8fa; border-radius: 10px; box-shadow: 0 .5px 1px rgba(0,0,0,.2); font-size: 9.800px; letter-spacing: -.3px; color: #60686d; }
.books { margin-left: auto; }
.current::before { content: ""; position: absolute; inset: 0 2px; background: rgba(255,255,255,.6); border-radius: 3px; }
.current svg { position: relative; }
.open::after, .current::after { content: ""; position: absolute; bottom: 0; width: 4px; height: 2px; border-radius: 1px; background: #858d91; }
.current::after { width: 10px; background: #267d99; }
.tray { display: flex; align-items: center; padding: 0 12px 0 153px; }
.lang { margin-left: 14px; width: 16px; }
.status { display: flex; gap: 5px; margin-left: 12px; }
.tray .right { margin-left: auto; }
```
